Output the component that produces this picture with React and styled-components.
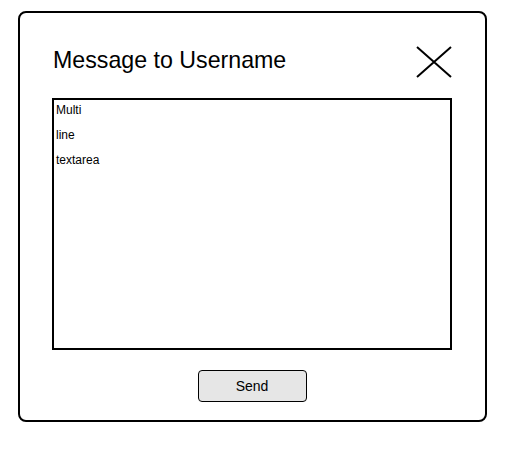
import React from "react";
import styled, { createGlobalStyle } from "styled-components";

const Global = createGlobalStyle`
  html, body { margin: 0; padding: 0; background: #ffffff; }
  body { font-family: "Liberation Sans", Arial, sans-serif; color: #000; }
`;

const Dialog = styled.div`
  box-sizing: border-box;
  margin: 11px 0 0 18px;
  width: 469px;
  height: 411px;
  border: 2px solid #000;
  border-radius: 8px;
  padding: 33px 33px 0 32px;
  display: flex;
  flex-direction: column;
`;

const Header = styled.div`
  display: flex;
  align-items: flex-start;
  justify-content: space-between;
  height: 32px;
  margin-bottom: 20px;
`;

const Title = styled.h1`
  margin: 0 0 0 1px;
  font-size: 23.2px;
  font-weight: normal;
  line-height: 26px;
  padding-top: 1px;
`;

const CloseButton = styled.button`
  border: none;
  background: none;
  padding: 0;
  width: 36px;
  height: 32px;
  cursor: pointer;
  display: block;
`;

const TextArea = styled.div`
  box-sizing: border-box;
  width: 400px;
  height: 252px;
  border: 2px solid #000;
  padding: 3px 3px 0 2px;
  display: flex;
  flex-direction: column;
  gap: 11px;
  font-size: 12px;
`;

const Line = styled.div`
  line-height: 14px;
`;

const Footer = styled.div`
  display: flex;
  justify-content: center;
  margin-top: 20px;
`;

const SendButton = styled.button`
  box-sizing: border-box;
  width: 109px;
  height: 32px;
  background: #e6e6e6;
  border: 1.5px solid #000;
  border-radius: 4px;
  font-family: "Liberation Sans", Arial, sans-serif;
  font-size: 14px;
  color: #000;
  padding: 0;
  cursor: pointer;
`;

export default function App() {
  return (
    <>
      <Global />
      <Dialog>
        <Header>
          <Title>Message to Username</Title>
          <CloseButton aria-label="Close">
            <svg width="36" height="32" viewBox="0 0 36 32">
              <path d="M1 1 L35 31 M35 1 L1 31" stroke="#000" strokeWidth="2" fill="none" />
            </svg>
          </CloseButton>
        </Header>
        <TextArea>
          <Line>Multi</Line>
          <Line>line</Line>
          <Line>textarea</Line>
        </TextArea>
        <Footer>
          <SendButton>Send</SendButton>
        </Footer>
      </Dialog>
    </>
  );
}
